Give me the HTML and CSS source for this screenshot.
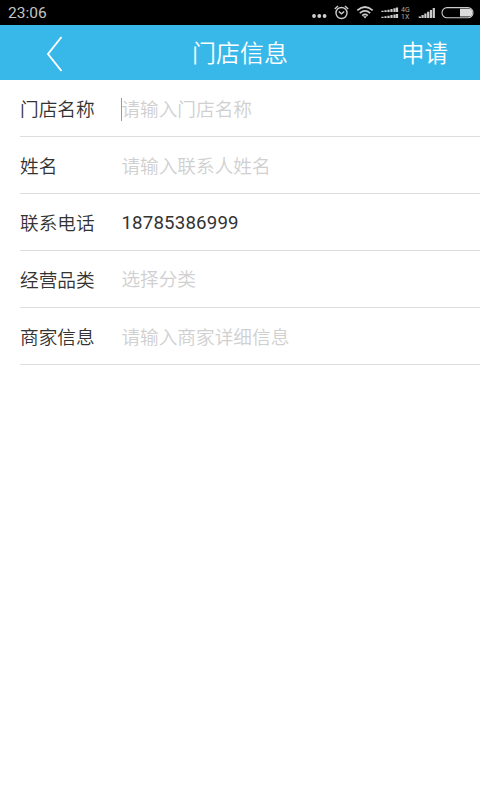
FILE: index.html
```html
<!DOCTYPE html>
<html lang="zh-CN">
<head>
<meta charset="utf-8">
<title>门店信息</title>
<link rel="stylesheet" href="styles.css">
</head>
<body>
<div class="status">
  <span class="time">23:06</span>
  <svg class="status-icons" width="170" height="25" viewBox="310 0 170 25" fill="none" stroke="#ccc">
    <g fill="#d0d0d0" stroke="none">
      <circle cx="314" cy="16" r="1.900"/><circle cx="319.300" cy="16" r="1.900"/><circle cx="324.600" cy="16" r="1.900"/>
    </g>
    <circle cx="341.500" cy="13" r="5.500" stroke-width="1.400"/>
    <path d="M338.800 11.500l2.700 2.300 2.700-2.300M334.800 9l3.200-2.900M348.200 9l-3.200-2.900" stroke-width="1.400"/>
    <path d="M357.300 10.300q7.700-6.600 15.400 0M359.800 13.100q5.200-4.400 10.400 0M362.200 15.600q2.800-2.300 5.600 0" stroke-width="1.700"/>
    <path d="M363 16.300h4l-2 2.200z" fill="#ccc" stroke="none"/>
    <path d="M382.500 12v-1.200M385.500 12v-1.700M388.500 12v-2.300M391.500 12v-3M394.500 12v-3.800M397 12v-4.500M382.500 18v-1.200M385.500 18v-1.700M388.500 18v-2.300M391.500 18v-3M394.500 18v-3.600M397 18v-4" stroke-width="2.200"/>
    <path d="M419.800 18v-1.500M422.600 18v-3M425.400 18v-4.600M428.200 18v-6.300M431 18v-8M433.800 18v-10" stroke-width="2.200"/>
    <rect x="442" y="7.600" width="31" height="10.200" rx="5.100" stroke-width="1.100"/>
    <path d="M460 8.800h8.500a3.900 3.900 0 0 1 0 7.800H460z" fill="#ddd" stroke="none"/>
    <g class="net" fill="#aaa" stroke="none"><text x="401" y="12">4G</text><text x="401" y="18.500">1X</text></g>
  </svg>
</div>
<header class="bar">
  <svg class="back" width="20" height="38" viewBox="0 0 20 38" fill="none" stroke="#fff" stroke-width="1.900"><path d="M16.500 2L3 19l13.500 17"/></svg>
  <h1 class="title">门店信息</h1>
  <span class="apply">申请</span>
</header>
<main class="form">
  <div class="row"><span class="label">门店名称</span><span class="field hint focused">请输入门店名称</span></div>
  <div class="row"><span class="label">姓名</span><span class="field hint">请输入联系人姓名</span></div>
  <div class="row"><span class="label">联系电话</span><span class="field phone">18785386999</span></div>
  <div class="row"><span class="label">经营品类</span><span class="field hint select">选择分类</span></div>
  <div class="row"><span class="label">商家信息</span><span class="field hint">请输入商家详细信息</span></div>
</main>
</body>
</html>
```
FILE: styles.css
```css
* { box-sizing: border-box; }
body {
  margin: 0;
  min-height: 800px;
  background: #fff;
  color: #333;
  font-family: Roboto, "Noto Sans CJK SC", sans-serif;
}
.status {
  display: flex;
  justify-content: space-between;
  height: 25px;
  background: #000;
}
.time {
  padding-left: 8px;
  font-size: 15.5px;
  line-height: 27px;
  color: #c4c4c4;
}
.status-icons { display: block; }
.net { font-size: 7px; }
.bar {
  display: grid;
  grid-template-columns: 120px 240px 120px;
  align-items: center;
  height: 55px;
  background: #38b8e9;
  color: #fff;
}
.back { margin: 2px 0 0 45px; }
.title {
  margin: 0;
  padding-top: 4px;
  font-size: 24px;
  font-weight: 350;
  line-height: 51px;
  text-align: center;
}
.apply {
  padding: 4px 32px 0 0;
  font-size: 23.5px;
  font-weight: 350;
  line-height: 51px;
  text-align: right;
}
.form { padding-left: 20px; }
.row {
  display: flex;
  align-items: center;
  height: 57px;
  padding-top: 3px;
  border-bottom: 1px solid #dedede;
  font-size: 18.67px;
  font-weight: 350;
  line-height: 24px;
}
.label { width: 101px; }
.field { padding-left: 0.4px; }
.phone {
  padding-bottom: 2px;
  font-weight: 400;
  letter-spacing: 0.18px;
}
.select { padding-bottom: 2px; }
.hint { color: #d0d0d0; }
.focused {
  background: linear-gradient(#999, #999) 0 -1px / 1px 100% no-repeat;
}
```
